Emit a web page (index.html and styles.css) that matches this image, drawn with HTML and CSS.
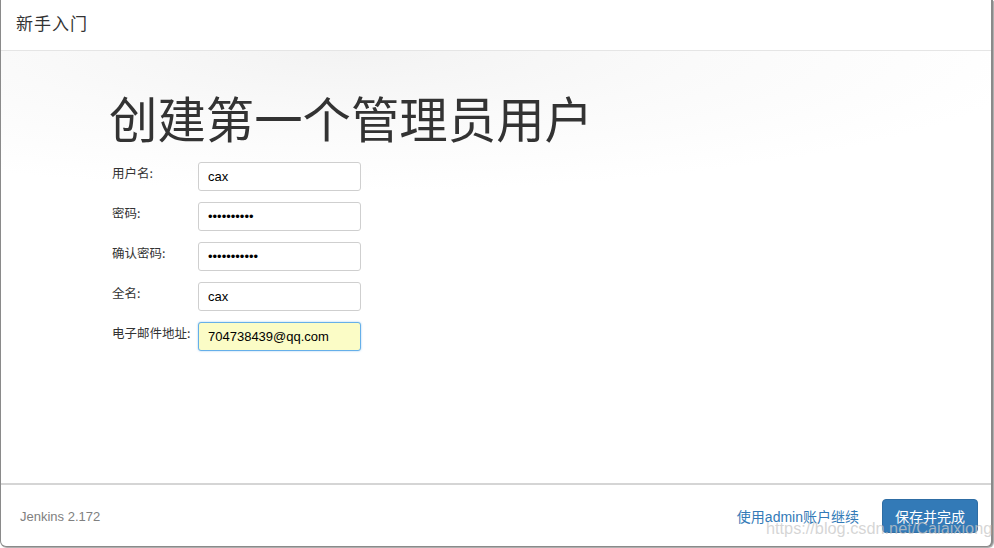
FILE: index.html
```html
<!DOCTYPE html>
<html lang="zh">
<head>
<meta charset="utf-8">
<title>新手入门</title>
<link rel="stylesheet" href="styles.css">
</head>
<body>
<div class="modal">
  <div class="modal-header">
    <h4 class="modal-title">新手入门</h4>
  </div>
  <div class="modal-body">
    <h1 class="page-title">创建第一个管理员用户</h1>
    <form class="user-form">
      <div class="row">
        <label class="label">用户名:</label>
        <input class="field" type="text" value="cax">
      </div>
      <div class="row">
        <label class="label">密码:</label>
        <input class="field" type="password" value="abcdefghij">
      </div>
      <div class="row">
        <label class="label">确认密码:</label>
        <input class="field" type="password" value="abcdefghijk">
      </div>
      <div class="row">
        <label class="label">全名:</label>
        <input class="field" type="text" value="cax">
      </div>
      <div class="row">
        <label class="label">电子邮件地址:</label>
        <input class="field field-autofill" type="text" value="704738439@qq.com">
      </div>
    </form>
  </div>
  <div class="modal-footer">
    <div class="version">Jenkins 2.172</div>
    <div class="actions">
      <a class="btn-link" href="#">使用admin账户继续</a>
      <button class="btn-primary" type="button">保存并完成</button>
    </div>
    <div class="watermark">https://blog.csdn.net/Caiaixiong</div>
  </div>
</div>
</body>
</html>
```

FILE: styles.css
```css
html, body {
  margin: 0;
  padding: 0;
  background: #ffffff;
}
body {
  width: 994px;
  height: 548px;
  overflow: hidden;
  font-family: "Liberation Sans", "Noto Sans CJK SC", sans-serif;
  color: #333;
}
.modal {
  box-sizing: border-box;
  width: 993px;
  height: 547px;
  border: 1px solid #8a8a8a;
  border-top: none;
  border-right: 2px solid #8a8a8a;
  border-radius: 0 0 6px 6px;
  box-shadow: 1px 1px 1px rgba(0,0,0,0.35);
  display: flex;
  flex-direction: column;
  position: relative;
  background: #fff;
}
.modal-header {
  height: 50px;
  border-bottom: 1px solid #e5e5e5;
  display: flex;
  align-items: center;
  padding-left: 15px;
  flex: none;
}
.modal-title {
  margin: 0;
  font-family: "Noto Sans CJK SC", sans-serif;
  font-size: 17px;
  font-weight: normal;
  color: #333;
  letter-spacing: 1px;
  position: relative;
  top: -3px;
}
.modal-body {
  flex: 1;
  background: radial-gradient(ellipse 700px 140px at 35% 0, #f3f3f3 0%, #fafafa 50%, #ffffff 100%);
  padding-left: 108px;
  border-bottom: 2px solid #d5d5d5;
}
.page-title {
  margin: 34px 0 13px;
  font-family: "Noto Sans CJK SC", sans-serif;
  font-size: 48.4px;
  font-weight: normal;
  line-height: 64px;
  color: #333;
}
.user-form {
  display: flex;
  flex-direction: column;
  gap: 11px;
}
.row {
  display: flex;
  align-items: flex-start;
}
.label {
  width: 86px;
  padding-left: 3px;
  font-family: "Noto Sans CJK SC", sans-serif;
  font-size: 12.5px;
  color: #333;
  line-height: 20px;
  padding-top: 1px;
}
.field {
  box-sizing: border-box;
  width: 163px;
  height: 29px;
  border: 1px solid #cfcfcf;
  border-radius: 3px;
  padding: 0 9px;
  font-family: "Liberation Sans", sans-serif;
  font-size: 13px;
  color: #000;
  background: #fff;
  outline: none;
  margin: 0;
}
.field.field-autofill {
  background: #fbfcc6;
  border: 1px solid #66afe9;
  box-shadow: 0 0 2px rgba(102,175,233,0.7);
}
.modal-footer {
  flex: none;
  height: 61px;
  display: flex;
  align-items: center;
  justify-content: space-between;
  padding: 0 13px 0 19px;
  position: relative;
}
.version {
  font-size: 13px;
  color: #808080;
  padding-top: 1px;
}
.actions {
  display: flex;
  align-items: center;
  gap: 23px;
  padding-top: 1px;
}
.btn-link, .btn-primary {
  font-family: "Liberation Sans", "Noto Sans CJK SC", sans-serif;
}
.btn-link {
  font-size: 14px;
  color: #337ab7;
  text-decoration: none;
}
.btn-primary {
  width: 96px;
  height: 34px;
  border: 1px solid #2e6da4;
  border-radius: 4px;
  background: #337ab7;
  color: #fff;
  font-size: 14px;
  padding: 0;
}
.watermark {
  position: absolute;
  left: 765px;
  top: 34px;
  font-family: "Liberation Sans", sans-serif;
  font-size: 16.3px;
  color: rgba(200,200,200,0.75);
  white-space: nowrap;
  pointer-events: none;
}
```
